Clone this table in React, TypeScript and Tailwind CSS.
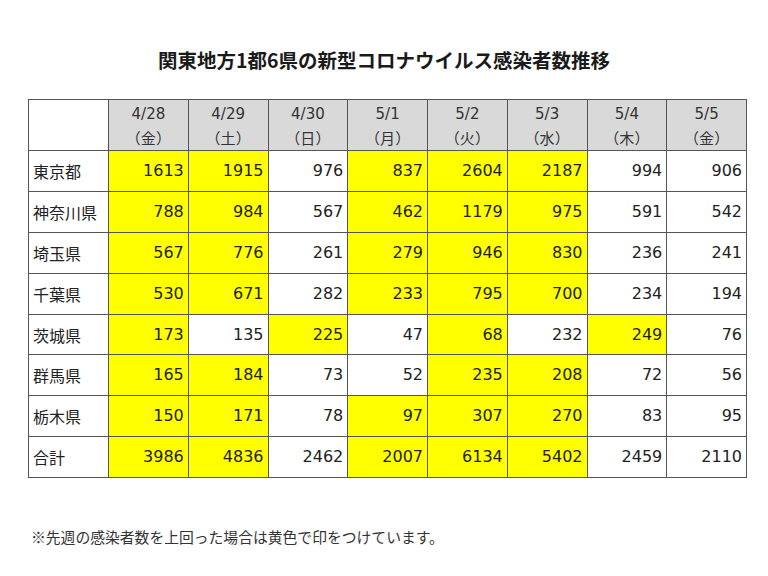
const days = [
  { date: "4/28", dow: "金" },
  { date: "4/29", dow: "土" },
  { date: "4/30", dow: "日" },
  { date: "5/1", dow: "月" },
  { date: "5/2", dow: "火" },
  { date: "5/3", dow: "水" },
  { date: "5/4", dow: "木" },
  { date: "5/5", dow: "金" },
];

// [value, 先週より多い(黄色)]
const rows: { name: string; cells: [number, boolean][] }[] = [
  { name: "東京都", cells: [[1613, true], [1915, true], [976, false], [837, true], [2604, true], [2187, true], [994, false], [906, false]] },
  { name: "神奈川県", cells: [[788, true], [984, true], [567, false], [462, true], [1179, true], [975, true], [591, false], [542, false]] },
  { name: "埼玉県", cells: [[567, true], [776, true], [261, false], [279, true], [946, true], [830, true], [236, false], [241, false]] },
  { name: "千葉県", cells: [[530, true], [671, true], [282, false], [233, true], [795, true], [700, true], [234, false], [194, false]] },
  { name: "茨城県", cells: [[173, true], [135, false], [225, true], [47, false], [68, true], [232, false], [249, true], [76, false]] },
  { name: "群馬県", cells: [[165, true], [184, true], [73, false], [52, false], [235, true], [208, true], [72, false], [56, false]] },
  { name: "栃木県", cells: [[150, true], [171, true], [78, false], [97, true], [307, true], [270, true], [83, false], [95, false]] },
  { name: "合計", cells: [[3986, true], [4836, true], [2462, false], [2007, true], [6134, true], [5402, true], [2459, false], [2110, false]] },
];

export default function App() {
  return (
    <div
      className="w-[768px] h-[576px] bg-white text-[#222] flex flex-col"
      style={{ fontFamily: '"DejaVu Sans", "Noto Sans CJK JP", sans-serif' }}
    >
      {/* タイトル */}
      <h1
        className="pt-[46px] h-[99px] text-center text-[19.5px] font-bold leading-[28px] text-[#1a1a1a] pl-[0px]"
        style={{ fontFamily: '"Noto Sans CJK JP", sans-serif' }}
      >
        関東地方1都6県の新型コロナウイルス感染者数推移
      </h1>

      {/* 表 */}
      <div className="pl-[28px]">
        <table className="border-collapse table-fixed w-[718px]">
          <colgroup>
            <col className="w-[80px]" />
            {days.map((d, i) => (
              <col key={i} className="w-[79.75px]" />
            ))}
          </colgroup>
          <thead>
            <tr className="h-[51px]">
              <th className="border border-[#555] bg-white"></th>
              {days.map((d, i) => (
                <th
                  key={i}
                  className="border border-[#555] bg-[#d9d9d9] font-normal text-[15px] leading-[23px] text-[#333] text-center align-middle pt-[2px]"
                >
                  <div>{d.date}</div>
                  <div style={{ fontFamily: '"Noto Sans CJK JP", sans-serif' }}>（{d.dow}）</div>
                </th>
              ))}
            </tr>
          </thead>
          <tbody>
            {rows.map((r) => (
              <tr key={r.name} className="h-[40.9px]">
                <td
                  className="border border-[#555] px-[4px] text-[16px] text-left align-middle"
                  style={{ fontFamily: '"Noto Sans CJK JP", sans-serif' }}
                >
                  {r.name}
                </td>
                {r.cells.map(([v, hit], i) => (
                  <td
                    key={i}
                    className={`border border-[#555] pr-[4px] text-[16px] text-right align-middle ${
                      hit ? "bg-[#ffff00]" : "bg-white"
                    }`}
                  >
                    {v}
                  </td>
                ))}
              </tr>
            ))}
          </tbody>
        </table>
      </div>

      {/* 注記 */}
      <p
        className="pl-[31px] pt-[49px] text-[14.8px] text-[#333] leading-[20px]"
        style={{ fontFamily: '"Noto Sans CJK JP", sans-serif' }}
      >
        ※先週の感染者数を上回った場合は黄色で印をつけています。
      </p>
    </div>
  );
}
